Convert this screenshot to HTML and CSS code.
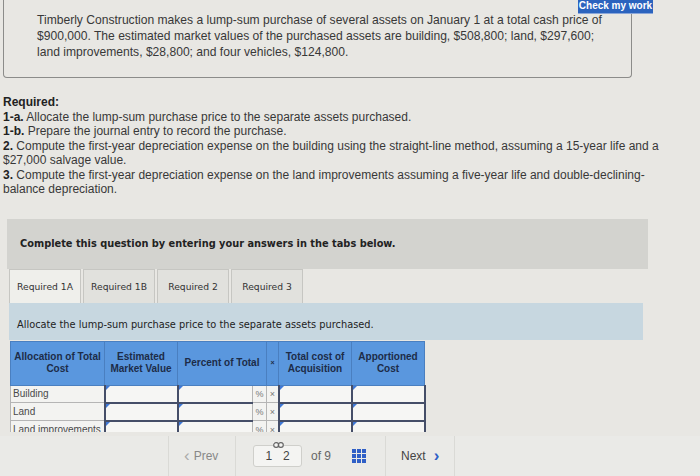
FILE: index.html
```html
<!DOCTYPE html>
<html lang="en">

<head>
    <meta charset="UTF-8">
    <meta
        name="viewport"
        content="width=device-width, initial-scale=1.0"
    >
    <link rel="stylesheet" href="styles.css">
    <title>Lump-sum purchase</title>
</head>

<body>
    <a class="check-btn" href="#">Check my work</a>

    <div class="problem">
        <p>Timberly Construction makes a lump-sum purchase of several assets on January 1 at a total cash price of<br>
            $900,000. The estimated market values of the purchased assets are building, $508,800; land, $297,600;<br>
            land improvements, $28,800; and four vehicles, $124,800.</p>
    </div>

    <div class="required">
        <p class="req-title">Required:</p>
        <p><b>1-a.</b> Allocate the lump-sum purchase price to the separate assets purchased.</p>
        <p><b>1-b.</b> Prepare the journal entry to record the purchase.</p>
        <p><b>2.</b> Compute the first-year depreciation expense on the building using the straight-line method, assuming a 15-year life and a<br>$27,000 salvage value.</p>
        <p><b>3.</b> Compute the first-year depreciation expense on the land improvements assuming a five-year life and double-declining-<br>balance depreciation.</p>
    </div>

    <div class="instructions">Complete this question by entering your answers in the tabs below.</div>

    <div class="tabs">
        <button class="tab active">Required 1A</button>
        <button class="tab">Required 1B</button>
        <button class="tab">Required 2</button>
        <button class="tab">Required 3</button>
    </div>

    <div class="prompt">Allocate the lump-sum purchase price to the separate assets purchased.</div>

    <div class="table-clip">
        <table class="alloc">
            <colgroup>
                <col class="w-label">
                <col class="w-val">
                <col class="w-pct">
                <col class="w-unit">
                <col class="w-x">
                <col class="w-val">
                <col class="w-val">
            </colgroup>
            <thead>
                <tr>
                    <th>Allocation of Total Cost</th>
                    <th>Estimated Market Value</th>
                    <th colspan="2">Percent of Total</th>
                    <th class="x-head">×</th>
                    <th>Total cost of Acquisition</th>
                    <th>Apportioned Cost</th>
                </tr>
            </thead>
            <tbody>
                <tr>
                    <td class="label">Building</td>
                    <td class="entry"></td>
                    <td class="entry pct"></td>
                    <td class="unit">%</td>
                    <td class="unit">×</td>
                    <td class="entry"></td>
                    <td class="entry"></td>
                </tr>
                <tr>
                    <td class="label">Land</td>
                    <td class="entry"></td>
                    <td class="entry pct"></td>
                    <td class="unit">%</td>
                    <td class="unit">×</td>
                    <td class="entry"></td>
                    <td class="entry"></td>
                </tr>
                <tr>
                    <td class="label">Land improvements</td>
                    <td class="entry"></td>
                    <td class="entry pct"></td>
                    <td class="unit">%</td>
                    <td class="unit">×</td>
                    <td class="entry"></td>
                    <td class="entry"></td>
                </tr>
            </tbody>
        </table>
    </div>

    <nav class="pager">
        <div class="seg prev"><span class="chev">&lsaquo;</span> Prev</div>
        <div class="seg pages">
            <div class="page-box">
                <svg class="link-icon" width="11" height="6" viewBox="0 0 11 6">
                    <rect x="0.7" y="0.7" width="5" height="4.6" rx="2.3" fill="none" stroke="#666" stroke-width="1.2"/>
                    <rect x="5.3" y="0.7" width="5" height="4.6" rx="2.3" fill="none" stroke="#666" stroke-width="1.2"/>
                </svg>
                <span>1</span><span>2</span>
            </div>
            <span class="of">of 9</span>
            <svg class="grid-icon" width="14" height="14" viewBox="0 0 14 14">
                <g fill="#2f5fc6">
                    <rect x="0" y="0" width="4" height="4"/><rect x="5" y="0" width="4" height="4"/><rect x="10" y="0" width="4" height="4"/>
                    <rect x="0" y="5" width="4" height="4"/><rect x="5" y="5" width="4" height="4"/><rect x="10" y="5" width="4" height="4"/>
                    <rect x="0" y="10" width="4" height="4"/><rect x="5" y="10" width="4" height="4"/><rect x="10" y="10" width="4" height="4"/>
                </g>
            </svg>
        </div>
        <div class="seg next">Next <span class="chev">&rsaquo;</span></div>
    </nav>
</body>

</html>
```

FILE: styles.css
```css
body {
    position: relative;
    margin: 0;
    height: 476px;
    overflow: hidden;

    background-color: #e8e7e3;
    color: #383838;
    font-family: "Liberation Sans", Arial, sans-serif;
}

p {
    margin: 0;
}

b {
    color: #222;
}

.check-btn {
    position: absolute;
    top: 0;
    left: 578px;
    width: 75px;
    height: 13px;

    background-color: #2b63be;
    border-bottom: 1px solid #8aa6d8;
    color: white;
    font-size: 10px;
    font-weight: bold;
    line-height: 11px;
    text-align: center;
    text-decoration: none;
}

.problem {
    width: 629px;
    margin-left: 3px;
    padding: 12px 0 17px 33px;
    box-sizing: border-box;

    border: 1px solid #8c8c8a;
    border-top: none;
    border-radius: 0 0 4px 4px;
    font-size: 12.1px;
    line-height: 16px;
    white-space: nowrap;
}

.required {
    margin: 17px 0 0 3px;
    font-size: 12px;
    line-height: 14.5px;
    white-space: nowrap;
}

.req-title {
    font-weight: bold;
    color: #222;
}

.instructions {
    display: flex;
    align-items: center;
    width: 641px;
    height: 50px;
    margin: 22px 0 0 7px;
    padding-left: 13px;
    box-sizing: border-box;

    background-color: #d3d3cf;
    color: #222;
    font-family: "DejaVu Sans", Verdana, sans-serif;
    font-size: 9.8px;
    font-weight: bold;
}

.tabs {
    display: flex;
    gap: 2px;
    height: 34px;
    margin-left: 9px;
}

.tab {
    width: 72px;
    padding: 0;

    background-color: #e1e1dd;
    border: 1px solid #c6c6c2;
    border-bottom: none;
    color: #333;
    font-family: "DejaVu Sans", Verdana, sans-serif;
    font-size: 9.2px;
}

.tab.active {
    background-color: #efefeb;
}

.prompt {
    display: flex;
    align-items: center;
    width: 634px;
    height: 37px;
    margin-left: 9px;
    padding: 7px 0 0 8px;
    box-sizing: border-box;

    background-color: #c7d7e0;
    color: #222;
    font-family: "DejaVu Sans", Verdana, sans-serif;
    font-size: 9.8px;
}

.table-clip {
    height: 91px;
    margin: 1px 0 0 10px;
    overflow: hidden;
}

.alloc {
    border-collapse: collapse;
    table-layout: fixed;
    width: 414px;
    font-size: 10px;
}

.w-label {
    width: 94px;
}

.w-val {
    width: 73px;
}

.w-pct {
    width: 75px;
}

.w-unit {
    width: 14px;
}

.w-x {
    width: 12px;
}

.alloc th {
    height: 43px;
    padding: 0 2px;

    background-color: #5a97de;
    border: 1px solid #4a7fc0;
    color: #1d2c48;
    font-weight: bold;
    line-height: 12px;
}

.alloc th.x-head {
    padding: 0;
    font-size: 7px;
}

.alloc td {
    height: 16px;
    padding: 0;
    border: 1px solid #b5b5b5;
}

.alloc td.label {
    padding-left: 2px;
    background-color: #f3f3f1;
    color: #4a4a4a;
    white-space: nowrap;
}

.alloc td.entry {
    position: relative;
    background-color: #f6f6f4;
    border: 2px solid #454e68;
    border-top-width: 1px;
}

.alloc td.entry.pct {
    border-right: 1px solid #b5b5b5;
}

.alloc td.entry::before {
    content: "";
    position: absolute;
    top: 0;
    left: 0;
    border-top: 4px solid #3f78d6;
    border-right: 4px solid transparent;
}

.alloc td.unit {
    background-color: #f3f3f1;
    color: #777;
    font-size: 9px;
    text-align: center;
}

.pager {
    display: flex;
    height: 40px;
    margin-top: 4px;
    padding-left: 168px;

    background-color: #eaeae7;
    color: #555;
    font-size: 12px;
}

.seg {
    display: flex;
    align-items: center;
    border-left: 1px solid #dadad6;
}

.prev {
    width: 67px;
    padding-left: 15px;
    box-sizing: border-box;
    color: #888;
}

.chev {
    margin-right: 4px;
    font-size: 17px;
    color: #aaa;
}

.pages {
    width: 150px;
    padding-left: 17px;
    box-sizing: border-box;
}

.page-box {
    position: relative;
    display: flex;
    justify-content: space-around;
    align-items: center;
    width: 49px;
    height: 22px;
    padding: 0 6px;
    box-sizing: border-box;

    background-color: #f4f4f2;
    border: 1px solid #cfcfcb;
    border-radius: 3px;
    color: #444;
}

.link-icon {
    position: absolute;
    top: -4px;
    left: 19px;
    background-color: #f4f4f2;
}

.of {
    margin-left: 9px;
    color: #666;
}

.grid-icon {
    margin-left: 21px;
}

.next {
    width: 70px;
    padding-left: 15px;
    box-sizing: border-box;
    border-right: 1px solid #dadad6;
    color: #444;
}

.next .chev {
    margin: 0 0 0 8px;
    color: #2f5fc6;
    font-weight: bold;
}
```
